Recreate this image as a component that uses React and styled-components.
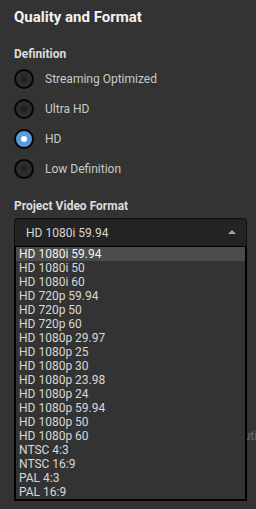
import React from 'react';
import styled, { createGlobalStyle } from 'styled-components';

const GlobalStyle = createGlobalStyle`
  html, body {
    margin: 0;
    padding: 0;
    background: #333333;
  }
  body {
    width: 256px;
    height: 509px;
    overflow: hidden;
    font-family: Roboto, "Liberation Sans", Arial, sans-serif;
  }
`;

const definitions = ['Streaming Optimized', 'Ultra HD', 'HD', 'Low Definition'];

const formats = [
  'HD 1080i 59.94',
  'HD 1080i 50',
  'HD 1080i 60',
  'HD 720p 59.94',
  'HD 720p 50',
  'HD 720p 60',
  'HD 1080p 29.97',
  'HD 1080p 25',
  'HD 1080p 30',
  'HD 1080p 23.98',
  'HD 1080p 24',
  'HD 1080p 59.94',
  'HD 1080p 50',
  'HD 1080p 60',
  'NTSC 4:3',
  'NTSC 16:9',
  'PAL 4:3',
  'PAL 16:9',
];

const QualityAndFormat = () => {
  return (
    <Panel>
      <Title>Quality and Format</Title>
      <SectionLabel>Definition</SectionLabel>
      <RadioGroup>
        {definitions.map((item) => (
          <RadioRow key={item}>
            <Radio checked={item === 'HD'} />
            <RadioText>{item}</RadioText>
          </RadioRow>
        ))}
      </RadioGroup>
      <SectionLabel className="format">Project Video Format</SectionLabel>
      <SelectWrap>
        <SelectBox>
          <span>HD 1080i 59.94</span>
          <Caret />
        </SelectBox>
        <BehindText>Resolution</BehindText>
        <OptionList>
          {formats.map((item, i) => (
            <Option key={item} active={i === 0}>
              {item}
            </Option>
          ))}
        </OptionList>
      </SelectWrap>
    </Panel>
  );
};

export default function App() {
  return (
    <>
      <GlobalStyle />
      <QualityAndFormat />
    </>
  );
}

const Panel = styled.div`
  position: relative;
  display: flex;
  flex-direction: column;
  padding: 9px 9px 0 14px;
  height: 509px;
  box-sizing: border-box;
  background: #333333;
`;

const Title = styled.h1`
  margin: 0;
  font-size: 15px;
  font-weight: bold;
  line-height: 17px;
  color: #f2f2f2;
`;

const SectionLabel = styled.h2`
  margin: 21px 0 0;
  font-size: 12px;
  font-weight: bold;
  line-height: 14px;
  color: #dcdcdc;
  &.format {
    margin-top: 20px;
  }
`;

const RadioGroup = styled.div`
  display: flex;
  flex-direction: column;
  gap: 10px;
  margin-top: 8px;
`;

const RadioRow = styled.div`
  display: flex;
  align-items: center;
  gap: 11px;
  height: 20px;
`;

const Radio = styled.span`
  position: relative;
  width: 20px;
  height: 20px;
  box-sizing: border-box;
  border-radius: 50%;
  border: 2px solid #050505;
  background: ${(p) => (p.checked ? '#5a9bd6' : '#2c2c2c')};
  flex-shrink: 0;
  &::after {
    content: '';
    position: absolute;
    left: 50%;
    top: 50%;
    width: 6px;
    height: 6px;
    transform: translate(-50%, -50%);
    border-radius: ${(p) => (p.checked ? '50%' : '1px')};
    background: ${(p) => (p.checked ? '#ffffff' : '#232323')};
  }
`;

const RadioText = styled.span`
  font-size: 12px;
  color: #c9c9c9;
`;

const SelectWrap = styled.div`
  position: relative;
  margin-top: 5px;
`;

const SelectBox = styled.div`
  display: flex;
  align-items: center;
  justify-content: space-between;
  height: 29px;
  box-sizing: border-box;
  padding: 0 10px 0 11px;
  background: #232323;
  border: 1px solid #0e0e0e;
  border-radius: 3px 3px 0 0;
  font-size: 12px;
  color: #d6d6d6;
`;

const Caret = styled.span`
  width: 0;
  height: 0;
  border-left: 4px solid transparent;
  border-right: 4px solid transparent;
  border-bottom: 4px solid #a8a8a8;
  margin-bottom: 2px;
`;

const BehindText = styled.span`
  position: absolute;
  top: 211px;
  left: 200px;
  font-size: 12px;
  color: #6e6e6e;
`;

const OptionList = styled.ul`
  position: absolute;
  z-index: 2;
  top: 28px;
  left: 0;
  width: 233px;
  margin: 0;
  padding: 0;
  list-style: none;
  box-sizing: border-box;
  background: #333333;
  border: 2px solid #000000;
  border-top-width: 1px;
`;

const Option = styled.li`
  height: 14px;
  line-height: 14px;
  padding-left: 3px;
  font-size: 12px;
  color: ${(p) => (p.active ? '#f4f4f4' : '#d8d8d8')};
  background: ${(p) => (p.active ? '#4b4b4b' : 'transparent')};
  white-space: nowrap;
`;
